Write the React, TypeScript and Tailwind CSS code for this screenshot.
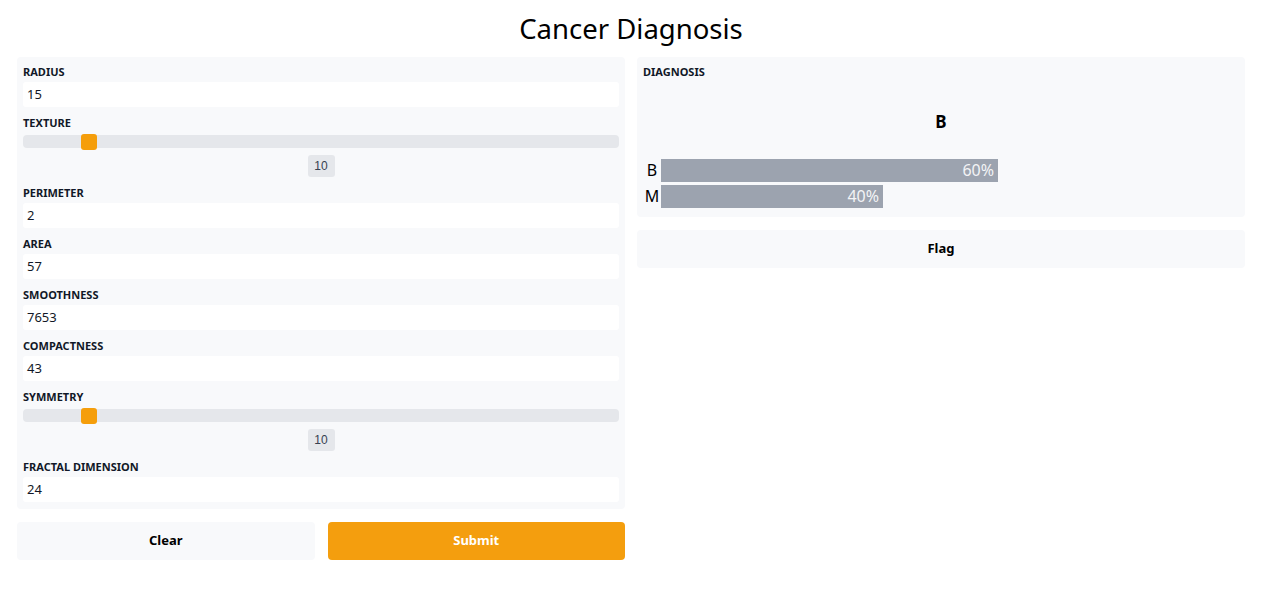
import React from 'react';

type Field =
  | { kind: 'text'; label: string; value: string }
  | { kind: 'slider'; label: string; value: number };

const fields: Field[] = [
  { kind: 'text', label: 'Radius', value: '15' },
  { kind: 'slider', label: 'Texture', value: 10 },
  { kind: 'text', label: 'Perimeter', value: '2' },
  { kind: 'text', label: 'Area', value: '57' },
  { kind: 'text', label: 'Smoothness', value: '7653' },
  { kind: 'text', label: 'Compactness', value: '43' },
  { kind: 'slider', label: 'Symmetry', value: 10 },
  { kind: 'text', label: 'Fractal Dimension', value: '24' },
];

const Label: React.FC<{ text: string }> = ({ text }) => (
  <div className="text-[11px] leading-[14px] font-bold uppercase text-[#111827]">{text}</div>
);

const TextField: React.FC<{ label: string; value: string }> = ({ label, value }) => (
  <div>
    <Label text={label} />
    <div className="mt-[3px] h-[25px] rounded-[3px] bg-white px-[4px] pt-[1px] flex items-center text-[13px] text-[#111827]">
      {value}
    </div>
  </div>
);

const SliderField: React.FC<{ label: string; value: number }> = ({ label, value }) => (
  <div>
    <Label text={label} />
    <div className="relative mt-[5px] h-[13px] rounded-[4px] bg-[#e5e7eb]">
      <div className="absolute left-[58px] top-[-1px] h-[16px] w-[16px] rounded-[3px] bg-[#f59e0b]" />
    </div>
    <div className="mt-[7px] flex justify-center">
      <div className="h-[22px] w-[27px] rounded-[3px] bg-[#e5e7eb] flex items-center justify-center text-[12px] text-[#374151] font-['Liberation_Sans',sans-serif]">
        {value}
      </div>
    </div>
  </div>
);

const bars = [
  { label: 'B', pct: 60, width: 'w-[337px]' },
  { label: 'M', pct: 40, width: 'w-[222px]' },
];

export default function App() {
  return (
    <div className="min-h-[590px] bg-white font-['Noto_Sans',sans-serif] text-[#111827]">
      <div className="ml-[17px] w-[1228px]">
        <h1 className="h-[57px] pt-[12px] text-center text-[27.5px] leading-[34px] text-black">
          Cancer Diagnosis
        </h1>

        <div className="flex gap-[12px]">
          {/* inputs column */}
          <div className="w-[608px]">
            <div className="rounded-[4px] bg-[#f8f9fb] px-[6px] pt-[8px] pb-[7px] flex flex-col gap-[9px]">
              {fields.map((f) =>
                f.kind === 'text' ? (
                  <TextField key={f.label} label={f.label} value={f.value} />
                ) : (
                  <SliderField key={f.label} label={f.label} value={f.value} />
                )
              )}
            </div>
            <div className="mt-[13px] flex gap-[13px]">
              <button className="h-[38px] flex-1 rounded-[4px] bg-[#f8f9fb] text-[13px] font-bold text-black">
                Clear
              </button>
              <button className="h-[38px] flex-1 rounded-[4px] bg-[#f49e0e] text-[13px] font-bold text-white">
                Submit
              </button>
            </div>
          </div>

          {/* output column */}
          <div className="w-[608px]">
            <div className="h-[160px] rounded-[4px] bg-[#f8f9fb] px-[6px] pt-[8px]">
              <Label text="Diagnosis" />
              <div className="mt-[31px] text-center text-[17px] leading-[24px] font-bold text-black">B</div>
              <div className="mt-[25px] flex flex-col gap-[3px]">
                {bars.map((b) => (
                  <div key={b.label} className="flex items-center">
                    <div className="w-[18px] text-center text-[16px] leading-[23px] text-black">{b.label}</div>
                    <div
                      className={`${b.width} h-[23px] bg-[#9ca3af] text-right pr-[4px] text-[16px] leading-[23px] text-[#f3f4f6]`}
                    >
                      {b.pct}%
                    </div>
                  </div>
                ))}
              </div>
            </div>
            <button className="mt-[13px] h-[38px] w-full rounded-[4px] bg-[#f8f9fb] text-[13px] font-bold text-black">
              Flag
            </button>
          </div>
        </div>
      </div>
    </div>
  );
}
